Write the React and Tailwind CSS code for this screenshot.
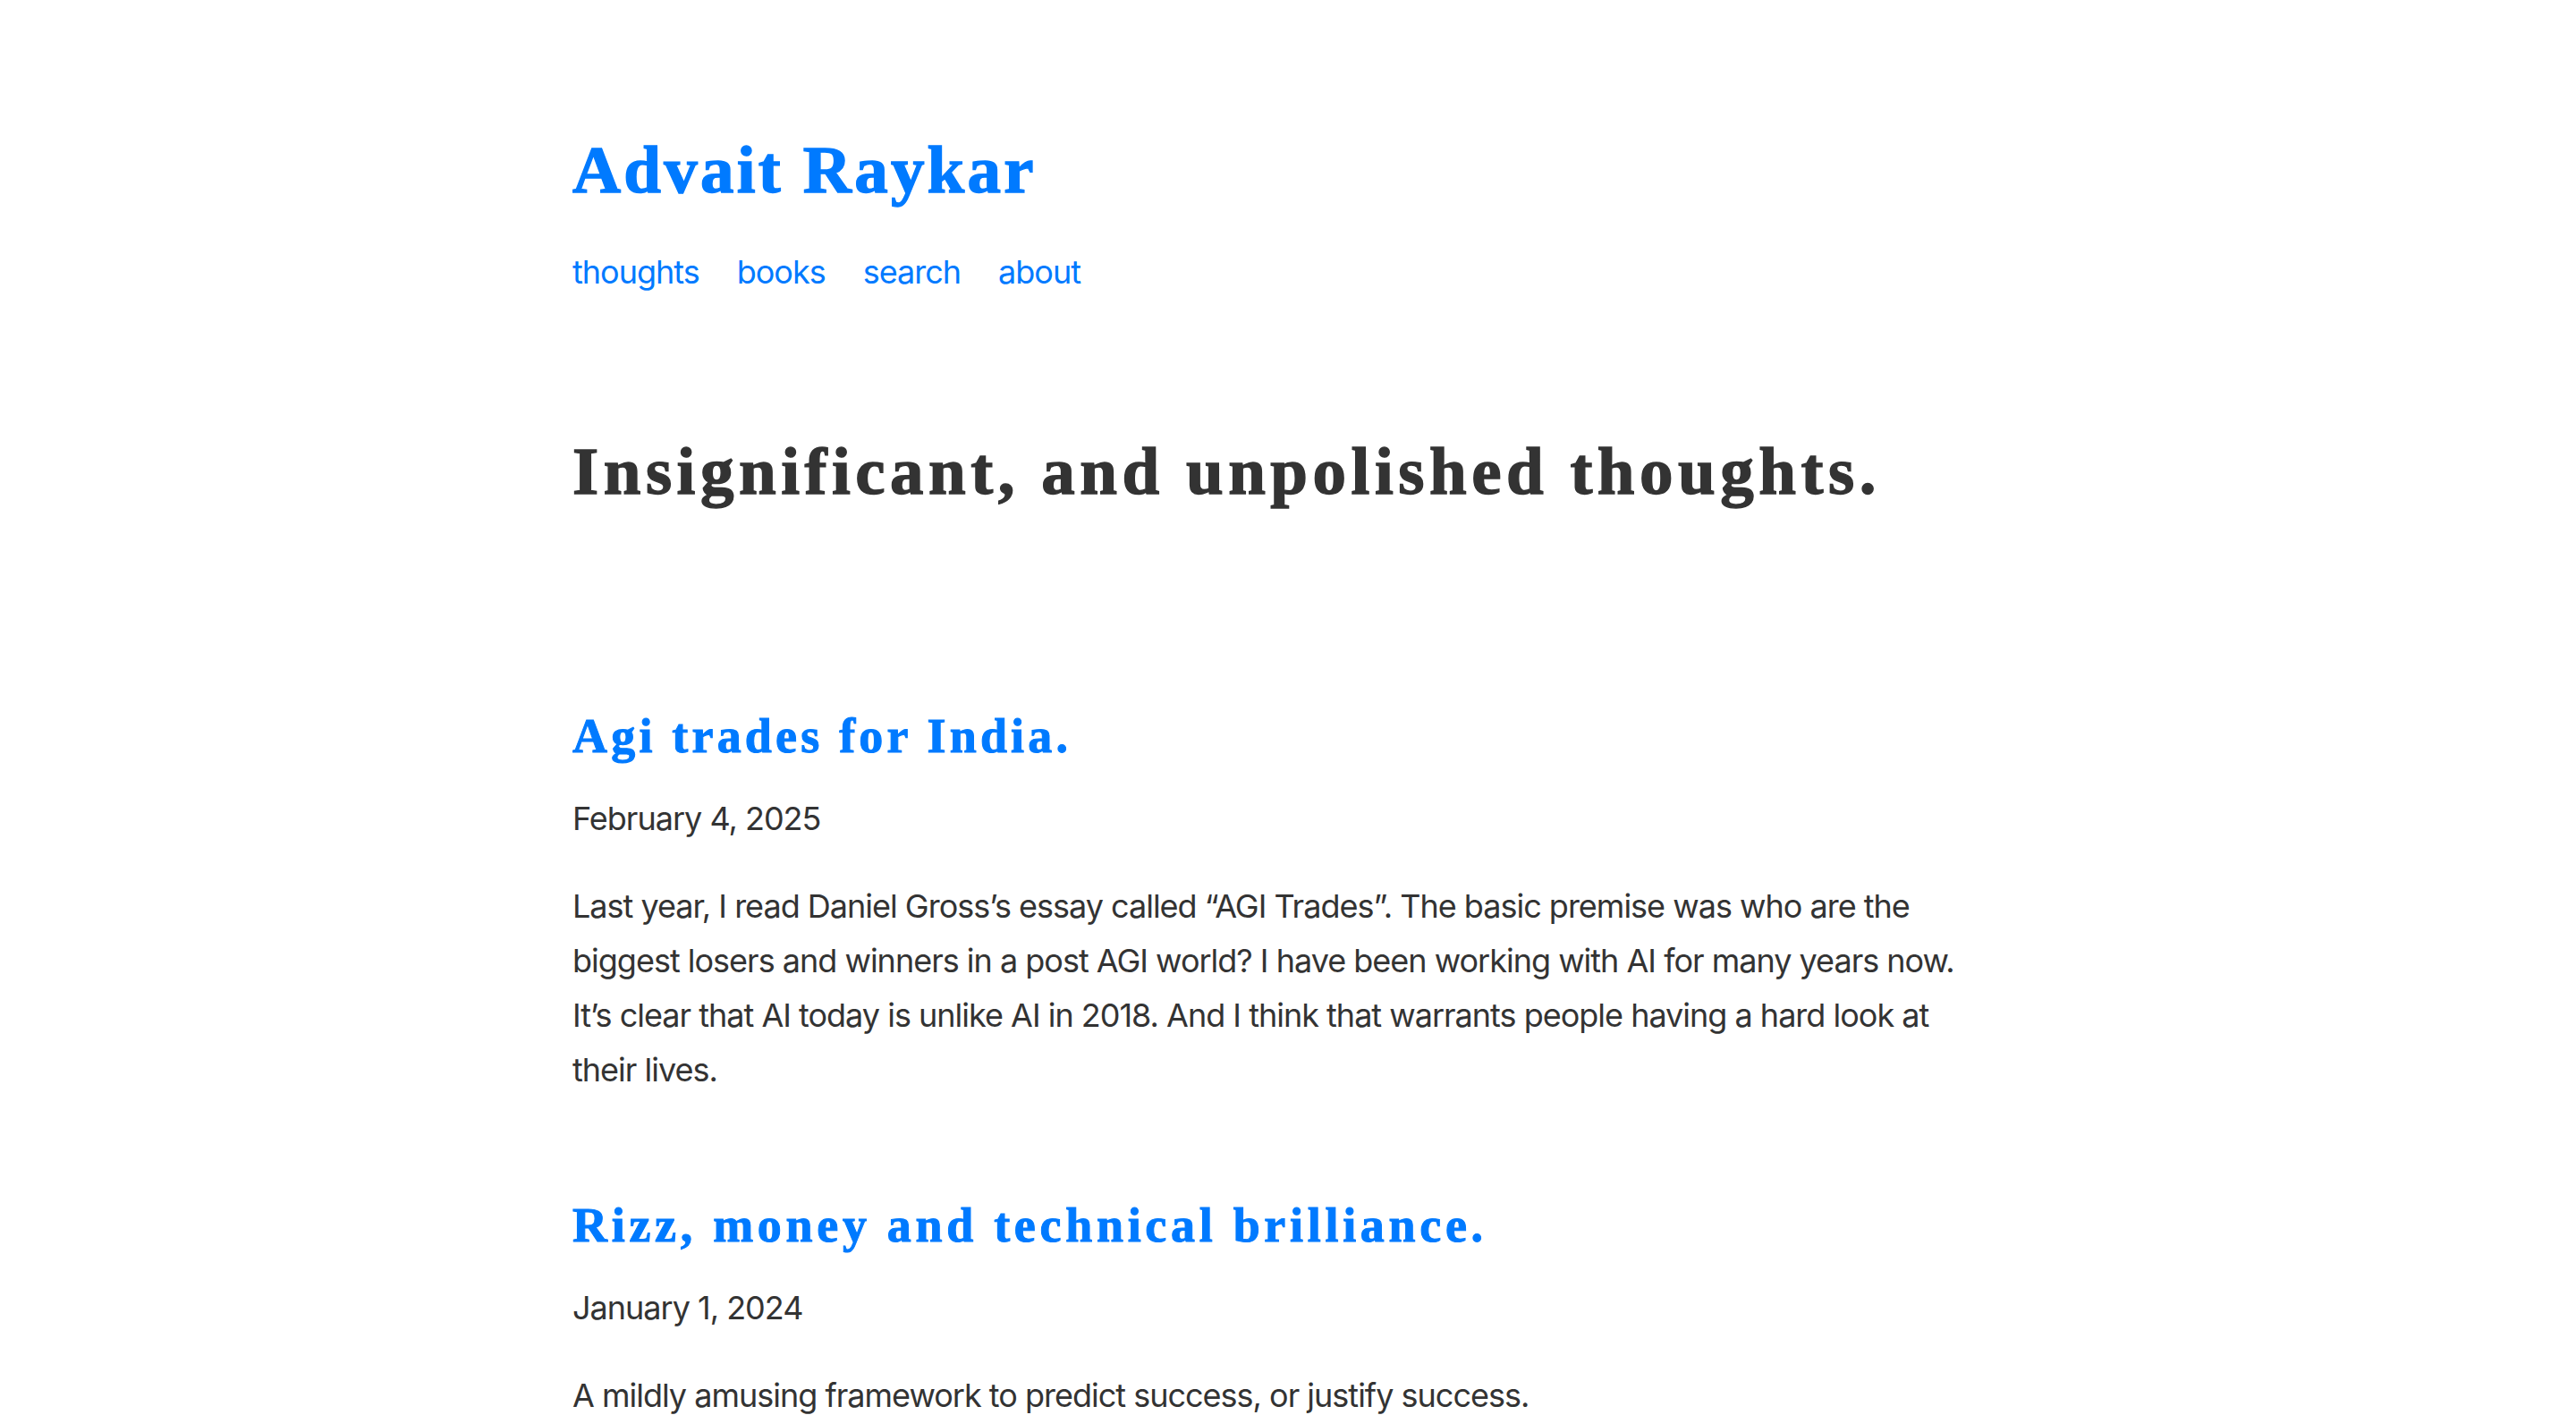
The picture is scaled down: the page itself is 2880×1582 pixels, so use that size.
export default function App() {
  const serif = { fontFamily: '"Liberation Serif", Georgia, serif' };
  return (
    <div className="min-h-screen bg-white text-[#333333]" style={{ fontFamily: 'Inter, "Noto Sans", sans-serif' }}>
      <div className="mx-auto w-[1600px] pt-[145px]">
        <h1 className="text-[75px] leading-[90px] font-bold text-[#007aff] tracking-[3.2px] [-webkit-text-stroke:1.4px_currentColor]" style={serif}>
          Advait Raykar
        </h1>
        <nav className="mt-[47px] flex gap-[42px] text-[36px] leading-[44px] text-[#007aff] tracking-[-1px]">
          <a href="#">thoughts</a>
          <a href="#">books</a>
          <a href="#">search</a>
          <a href="#">about</a>
        </nav>
        <h2 className="mt-[156px] text-[75px] leading-[90px] font-bold tracking-[5.5px] [-webkit-text-stroke:1.4px_currentColor]" style={serif}>
          Insignificant, and unpolished thoughts.
        </h2>

        <article className="mt-[219px]">
          <h3 className="text-[54px] leading-[65px] font-bold text-[#007aff] tracking-[4.2px] [-webkit-text-stroke:1px_currentColor]" style={serif}>
            Agi trades for India.
          </h3>
          <div className="mt-[29px] text-[36px] leading-[61px] tracking-[-1px]">February 4, 2025</div>
          <p className="mt-[37px] max-w-[1574px] text-[36px] leading-[61px] tracking-[-1px]">
            Last year, I read Daniel Gross’s essay called “AGI Trades”. The basic premise was who are the biggest losers and winners in a post AGI world? I have been working with AI for many years now. It’s clear that AI today is unlike AI in 2018. And I think that warrants people having a hard look at their lives.
          </p>
        </article>

        <article className="mt-[111px]">
          <h3 className="text-[54px] leading-[65px] font-bold text-[#007aff] tracking-[4.7px] [-webkit-text-stroke:1px_currentColor]" style={serif}>
            Rizz, money and technical brilliance.
          </h3>
          <div className="mt-[29px] text-[36px] leading-[61px] tracking-[-1px]">January 1, 2024</div>
          <p className="mt-[37px] max-w-[1574px] text-[36px] leading-[61px] tracking-[-1px]">
            A mildly amusing framework to predict success, or justify success.
          </p>
        </article>
      </div>
    </div>
  );
}
